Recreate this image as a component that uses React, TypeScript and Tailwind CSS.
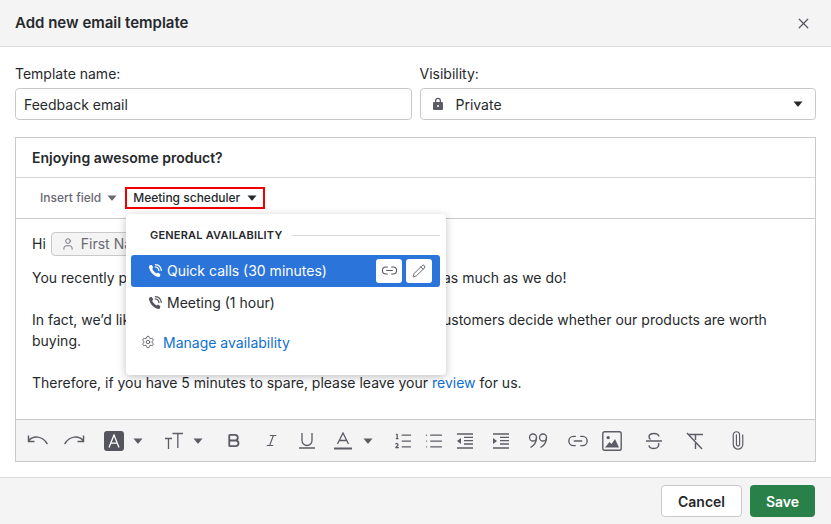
import { useState } from "react";
import {
  Bold,
  Italic,
  Link2,
  ListOrdered,
  List,
  Paperclip,
  Pencil,
  Settings,
  User,
  X,
} from "lucide-react";

function Caret({ className = "" }: { className?: string }) {
  return (
    <svg width="10" height="6" viewBox="0 0 10 6" className={className}>
      <path d="M0.5 0.5h9L5.6 5.2a.8.8 0 0 1-1.2 0z" fill="currentColor" />
    </svg>
  );
}

function Sep() {
  return <span className="h-[24px] w-px bg-[#d5d5d7]" />;
}

function PhoneIcon() {
  return (
    <svg width="14" height="14" viewBox="0 0 14 14" fill="none" stroke="currentColor">
      <path
        d="M2 1.2 3.8.9l1.5 2.7-1.1 1.2c.6 1.6 2.4 3.6 4.4 4.7l1.3-1 2.5 1.7-.4 1.8c-.2.7-1 1-1.8.9C6 12.300 1.800 8 1 3 .9 2.200 1.300 1.500 2 1.200z"
        fill="currentColor"
        stroke="none"
      />
      <path d="M7.200 2.800c2 .2 3.500 1.700 3.800 3.800" strokeWidth="1.200" strokeLinecap="round" />
      <path d="M7.500.6c3 .2 5.400 2.700 5.800 5.800" strokeWidth="1.200" strokeLinecap="round" />
    </svg>
  );
}

function Toolbar() {
  return (
    <div className="flex h-[41px] items-center bg-[#f4f4f4] pl-[10px] text-[#5c5c66]">
      <svg width="22" height="14" viewBox="0 0 22 14" fill="none" stroke="currentColor" strokeWidth="1.500" className="ml-[1px]">
        <path d="M2 6.500C6 1.500 15 1.500 20 9.500" strokeLinecap="round" />
        <path d="M1.500 1.500v6h6" />
      </svg>
      <svg width="22" height="14" viewBox="0 0 22 14" fill="none" stroke="currentColor" strokeWidth="1.500" className="ml-[14px]">
        <path d="M20 6.500C16 1.500 7 1.500 2 9.500" strokeLinecap="round" />
        <path d="M20.500 1.500v6h-6" />
      </svg>
      <div className="ml-[9px]"><Sep /></div>
      <div className="ml-[10px] flex h-[20px] w-[20px] items-center justify-center rounded-[3px] bg-[#55555f] text-white">
        <svg width="12" height="14" viewBox="0 0 12 14" fill="none" stroke="currentColor" strokeWidth="1.300">
          <path d="M1 13.500 6 1l5 12.500M2.800 9.200h6.400" />
        </svg>
      </div>
      <Caret className="ml-[9px]" />
      <div className="ml-[11px]"><Sep /></div>
      <svg width="20" height="18" viewBox="0 0 20 18" fill="none" stroke="currentColor" strokeWidth="1.300" className="ml-[10px]">
        <path d="M1 6.500h7M4.500 6.500V17M8.500 1.500H19M13.800 1.500V16" />
      </svg>
      <Caret className="ml-[9px]" />
      <div className="ml-[11px]"><Sep /></div>
      <Bold size={17} strokeWidth={2.6} className="ml-[11px]" />
      <Italic size={15} strokeWidth={1.800} className="ml-[22px]" />
      <svg width="16" height="17" viewBox="0 0 16 17" fill="none" stroke="currentColor" strokeWidth="1.300" className="ml-[20px]">
        <path d="M3 1v7.500a5 5 0 0 0 10 0V1M0 16h16" />
      </svg>
      <svg width="18" height="18" viewBox="0 0 18 18" fill="none" stroke="currentColor" strokeWidth="1.300" className="ml-[19px]">
        <path d="M3.500 12 9 1l5.500 11M5.200 8.500h7.600" />
        <path d="M0 16.500h18" strokeWidth="2" />
      </svg>
      <Caret className="ml-[11px]" />
      <div className="ml-[11px]"><Sep /></div>
      <ListOrdered size={20} strokeWidth={1.500} className="ml-[9px]" />
      <List size={20} strokeWidth={1.500} className="ml-[11px]" />
      <svg width="16" height="16" viewBox="0 0 16 16" className="ml-[13px]" fill="none" stroke="currentColor" strokeWidth="1.300">
        <path d="M0 1h16M7 4.300h9M7 7.600h9M7 11h9M0 15h16" />
        <path d="M4 5v6L0 8z" fill="currentColor" stroke="none" />
      </svg>
      <svg width="16" height="16" viewBox="0 0 16 16" className="ml-[20px]" fill="none" stroke="currentColor" strokeWidth="1.300">
        <path d="M0 1h16M7 4.300h9M7 7.600h9M7 11h9M0 15h16" />
        <path d="M0 5v6l4-3z" fill="currentColor" stroke="none" />
      </svg>
      <svg width="20" height="15" viewBox="0 0 20 15" className="ml-[19px]" fill="none" stroke="currentColor" strokeWidth="1.300">
        <circle cx="5" cy="4.500" r="3.500" />
        <path d="M8.500 4.500C8.500 9 6 12.500 2.500 14.500" />
        <circle cx="15" cy="4.500" r="3.500" />
        <path d="M18.500 4.500C18.500 9 16 12.500 12.500 14.500" />
      </svg>
      <div className="ml-[10px]"><Sep /></div>
      <Link2 size={22} strokeWidth={1.500} className="ml-[9px]" />
      <svg width="20" height="20" viewBox="0 0 20 20" className="ml-[13px]" fill="none" stroke="currentColor" strokeWidth="1.400">
        <rect x=".8" y=".8" width="18.400" height="18.400" rx="1.800" />
        <circle cx="6.200" cy="6.600" r="1.700" fill="currentColor" stroke="none" />
        <path d="M3 16.500 7.500 11l2 2 3.500-5 4 8.500z" fill="currentColor" stroke="none" />
      </svg>
      <div className="ml-[11px]"><Sep /></div>
      <svg width="16" height="18" viewBox="0 0 16 18" className="ml-[13px]" fill="none" stroke="currentColor" strokeWidth="1.400">
        <path d="M13 4.500C12.500 2.500 11 1.500 8 1.500c-3 0-5 1.200-5 3.300 0 1.200.6 2 1.500 2.700M0 9h16M12.500 11c.7 2 .1 5.500-4.500 5.500-3 0-4.700-1.200-5-3.200" />
      </svg>
      <div className="ml-[13px]"><Sep /></div>
      <svg width="18" height="18" viewBox="0 0 18 18" className="ml-[11px]" fill="none" stroke="currentColor" strokeWidth="1.400">
        <path d="M3 2.500h14M9.500 2.500V8M9.500 11v6M1 1l15 16" />
      </svg>
      <div className="ml-[11px]"><Sep /></div>
      <Paperclip size={19} strokeWidth={1.500} className="ml-[13px] -rotate-45" />
    </div>
  );
}

export default function App() {
  const [name, setName] = useState("Feedback email");

  return (
    <div className="flex h-[524px] w-[831px] flex-col overflow-hidden bg-white font-['Inter',sans-serif] text-[14px] text-[#26292c]">
      <div className="flex h-[47px] shrink-0 items-center justify-between border-b border-[#dcdcde] bg-[#f4f4f4] pl-[15px] pr-[19px]">
        <h1 className="text-[15px] font-semibold">Add new email template</h1>
        <X size={17} strokeWidth={1.700} className="text-[#55555f]" />
      </div>

      <div className="flex flex-1 flex-col px-[15px] pt-[18px]">
        <div className="flex gap-2">
          <div className="flex-1">
            <label className="block leading-[18px]">Template name:</label>
            <input
              value={name}
              onChange={(e) => setName(e.target.value)}
              className="mt-[5px] h-[32px] w-full rounded-[4px] border border-[#c9c9cc] px-[8px] text-[14px] outline-none"
            />
          </div>
          <div className="flex-1">
            <label className="block leading-[18px]">Visibility:</label>
            <div className="mt-[5px] flex h-[32px] items-center rounded-[4px] border border-[#c9c9cc] pl-[10px] pr-[12px]">
              <svg width="14" height="14" viewBox="0 0 14 14" className="text-[#5c5c66]">
                <path
                  fillRule="evenodd"
                  d="M4 5V3.800a3 3 0 0 1 6 0V5h1a1 1 0 0 1 1 1v6a1 1 0 0 1-1 1H3a1 1 0 0 1-1-1V6a1 1 0 0 1 1-1zm1.300 0h3.400V3.800a1.700 1.700 0 0 0-3.400 0zM7 8a1 1 0 1 0 0 2 1 1 0 0 0 0-2z"
                  fill="currentColor"
                />
              </svg>
              <span className="ml-[11px] flex-1">Private</span>
              <Caret className="text-[#26292c]" />
            </div>
          </div>
        </div>

        <div className="mt-[17px] border border-[#c9c9cc]">
          <div className="flex h-[40px] items-center border-b border-[#d5d5d7] px-[16px] font-semibold">
            Enjoying awesome product?
          </div>
          <div className="relative flex h-[41px] items-center border-b border-[#c9c9cc] pl-[24px] text-[12px] font-medium">
            <div className="flex items-center gap-[6px] text-[#6a6a73]">
              Insert field
              <Caret />
            </div>
            <div className="ml-[8px] flex h-[22px] w-[140px] items-center gap-[7px] border-2 border-[#f00000] pl-[6px]">
              Meeting scheduler
              <Caret />
            </div>

            <div className="absolute left-[110px] top-[36px] z-10 h-[161px] w-[320px] rounded-[4px] bg-white pl-[5px] pr-[6px] text-[14px] font-normal shadow-[0_2px_8px_rgba(0,0,0,0.25)]">
              <div className="flex items-center pl-[19px] pt-[13px] text-[11px] font-semibold tracking-[0.2px]">
                GENERAL AVAILABILITY
                <span className="ml-[8px] h-px flex-1 bg-[#dcdcde]" />
              </div>
              <div className="mt-[11px] flex h-[32px] items-center rounded-[3px] bg-[#2b74d9] pl-[17px] pr-[8px] text-white">
                <PhoneIcon />
                <span className="ml-[5px] flex-1">Quick calls (30 minutes)</span>
                <span className="flex h-[24px] w-[26px] items-center justify-center rounded-[3px] bg-white text-[#55555f]">
                  <Link2 size={17} strokeWidth={1.500} />
                </span>
                <span className="ml-[4px] flex h-[24px] w-[26px] items-center justify-center rounded-[3px] bg-white text-[#55555f]">
                  <Pencil size={14} strokeWidth={1.500} />
                </span>
              </div>
              <div className="flex h-[32px] items-center pl-[17px]">
                <span className="text-[#55555f]"><PhoneIcon /></span>
                <span className="ml-[5px]">Meeting (1 hour)</span>
              </div>
              <div className="mt-[13px] flex items-center pl-[10px] text-[#0f6fd1]">
                <Settings size={14} strokeWidth={1.500} className="text-[#55555f]" />
                <span className="ml-[8px]">Manage availability</span>
              </div>
            </div>
          </div>

          <div className="h-[200px] px-[16px] pt-[12px] leading-[21px]">
            <div className="flex h-[25px] items-center">
              Hi
              <span className="ml-[5px] flex h-[24px] items-center gap-[6px] rounded-[4px] border border-[#c9c9cc] bg-[#f4f4f4] px-[9px] text-[#6a6a73]">
                <User size={14} strokeWidth={1.500} />
                First Name
              </span>
            </div>
            <p className="mt-[11px]">You recently purchased our product and we hope you enjoy it as much as we do!</p>
            <p className="mt-[21px]">
              In fact, we’d like to ask for your feedback to help many other customers decide whether our products are worth buying.
            </p>
            <p className="mt-[21px]">
              Therefore, if you have 5 minutes to spare, please leave your{" "}
              <span className="text-[#0f6fd1]">review</span> for us.
            </p>
          </div>

          <div className="border-t border-[#c9c9cc]">
            <Toolbar />
          </div>
        </div>
      </div>

      <div className="flex h-[47px] shrink-0 items-center justify-end gap-2 border-t border-[#dcdcde] bg-[#f4f4f4] pr-[16px] text-[14px] font-semibold">
        <button className="h-[32px] w-[81px] rounded-[4px] border border-[#c9c9cc] bg-white">Cancel</button>
        <button className="h-[32px] w-[65px] rounded-[4px] bg-[#2a8049] text-white">Save</button>
      </div>
    </div>
  );
}
